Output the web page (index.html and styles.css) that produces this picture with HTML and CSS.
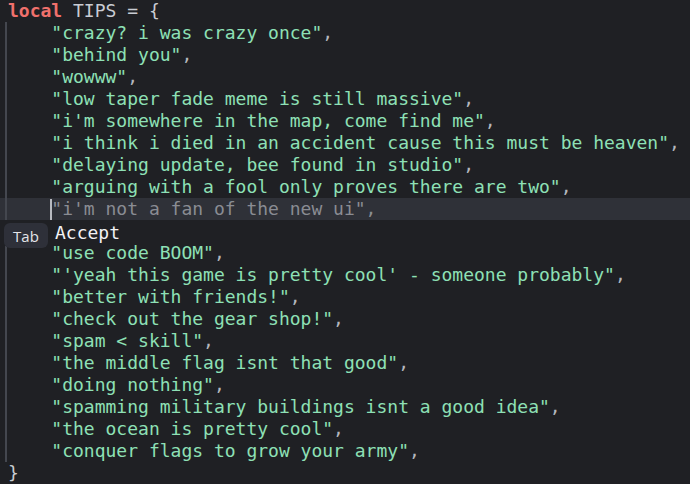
FILE: index.html
```html
<!DOCTYPE html>
<html>
<head>
<meta charset="utf-8">
<link rel="stylesheet" href="styles.css">
</head>
<body>
<div class="editor">
  <div class="line"><span class="kw">local</span><span class="id"> TIPS = {</span></div>
  <div class="block">
    <div class="line in"><span class="str">"crazy? i was crazy once"</span><span class="p">,</span></div>
    <div class="line in"><span class="str">"behind you"</span><span class="p">,</span></div>
    <div class="line in"><span class="str">"wowww"</span><span class="p">,</span></div>
    <div class="line in"><span class="str">"low taper fade meme is still massive"</span><span class="p">,</span></div>
    <div class="line in"><span class="str">"i'm somewhere in the map, come find me"</span><span class="p">,</span></div>
    <div class="line in"><span class="str">"i think i died in an accident cause this must be heaven"</span><span class="p">,</span></div>
    <div class="line in"><span class="str">"delaying update, bee found in studio"</span><span class="p">,</span></div>
    <div class="line in"><span class="str">"arguing with a fool only proves there are two"</span><span class="p">,</span></div>
    <div class="line in active"><span class="cursor"></span><span class="ghost">"i'm not a fan of the new ui",</span></div>
    <div class="line popup-row">
      <div class="popup"><span class="kbd">Tab</span><span class="accept">Accept</span></div>
    </div>
    <div class="line in"><span class="str">"use code BOOM"</span><span class="p">,</span></div>
    <div class="line in"><span class="str">"'yeah this game is pretty cool' - someone probably"</span><span class="p">,</span></div>
    <div class="line in"><span class="str">"better with friends!"</span><span class="p">,</span></div>
    <div class="line in"><span class="str">"check out the gear shop!"</span><span class="p">,</span></div>
    <div class="line in"><span class="str">"spam &lt; skill"</span><span class="p">,</span></div>
    <div class="line in"><span class="str">"the middle flag isnt that good"</span><span class="p">,</span></div>
    <div class="line in"><span class="str">"doing nothing"</span><span class="p">,</span></div>
    <div class="line in"><span class="str">"spamming military buildings isnt a good idea"</span><span class="p">,</span></div>
    <div class="line in"><span class="str">"the ocean is pretty cool"</span><span class="p">,</span></div>
    <div class="line in"><span class="str">"conquer flags to grow your army"</span><span class="p">,</span></div>
  </div>
  <div class="line"><span class="id">}</span></div>
</div>
</body>
</html>
```

FILE: styles.css
```css
html, body {
  margin: 0;
  padding: 0;
  background: #1f2024;
}
.editor {
  width: 690px;
  height: 484px;
  overflow: hidden;
  background: #1f2024;
  font-family: "DejaVu Sans Mono", "Liberation Mono", monospace;
  font-size: 18px;
  color: #c9ccd3;
}
.line {
  height: 22px;
  line-height: 22px;
  padding-left: 8px;
  white-space: pre;
}
.line.in {
  padding-left: calc(8px + 4ch);
}
.block {
  position: relative;
}
.block::before {
  content: "";
  position: absolute;
  left: 5px;
  top: 0;
  bottom: 0;
  width: 2px;
  background: #44474f;
  z-index: 2;
}
.kw {
  color: #f0706c;
  font-weight: bold;
}
.id {
  color: #c9ccd3;
}
.str {
  color: #8ee0b6;
}
.p {
  color: #b4b7be;
}
.active {
  background: #2f3138;
}
.cursor {
  display: inline-block;
  width: 2px;
  height: 21px;
  vertical-align: -5px;
  background: #b8bac0;
  margin-left: -1px;
  margin-right: -1px;
}
.ghost {
  color: #8a8c93;
}
.popup-row {
  position: relative;
}
.popup {
  position: absolute;
  left: 0;
  top: 0;
  height: 26px;
  padding-left: 4px;
  padding-right: 6px;
  display: flex;
  align-items: flex-start;
  background: #1f2024;
  z-index: 3;
}
.kbd {
  margin-top: 3px;
  height: 25px;
  width: 44px;
  border-radius: 6px;
  background: #2e3039;
  color: #e4e5e8;
  font-family: "Open Sans", "DejaVu Sans", sans-serif;
  font-size: 15px;
  font-weight: 500;
  line-height: 14px;
  display: flex;
  align-items: center;
  justify-content: center;
}
.accept {
  margin-left: 7px;
  margin-top: 5px;
  color: #f2f2f4;
  font-size: 18px;
  line-height: 16px;
}
```
